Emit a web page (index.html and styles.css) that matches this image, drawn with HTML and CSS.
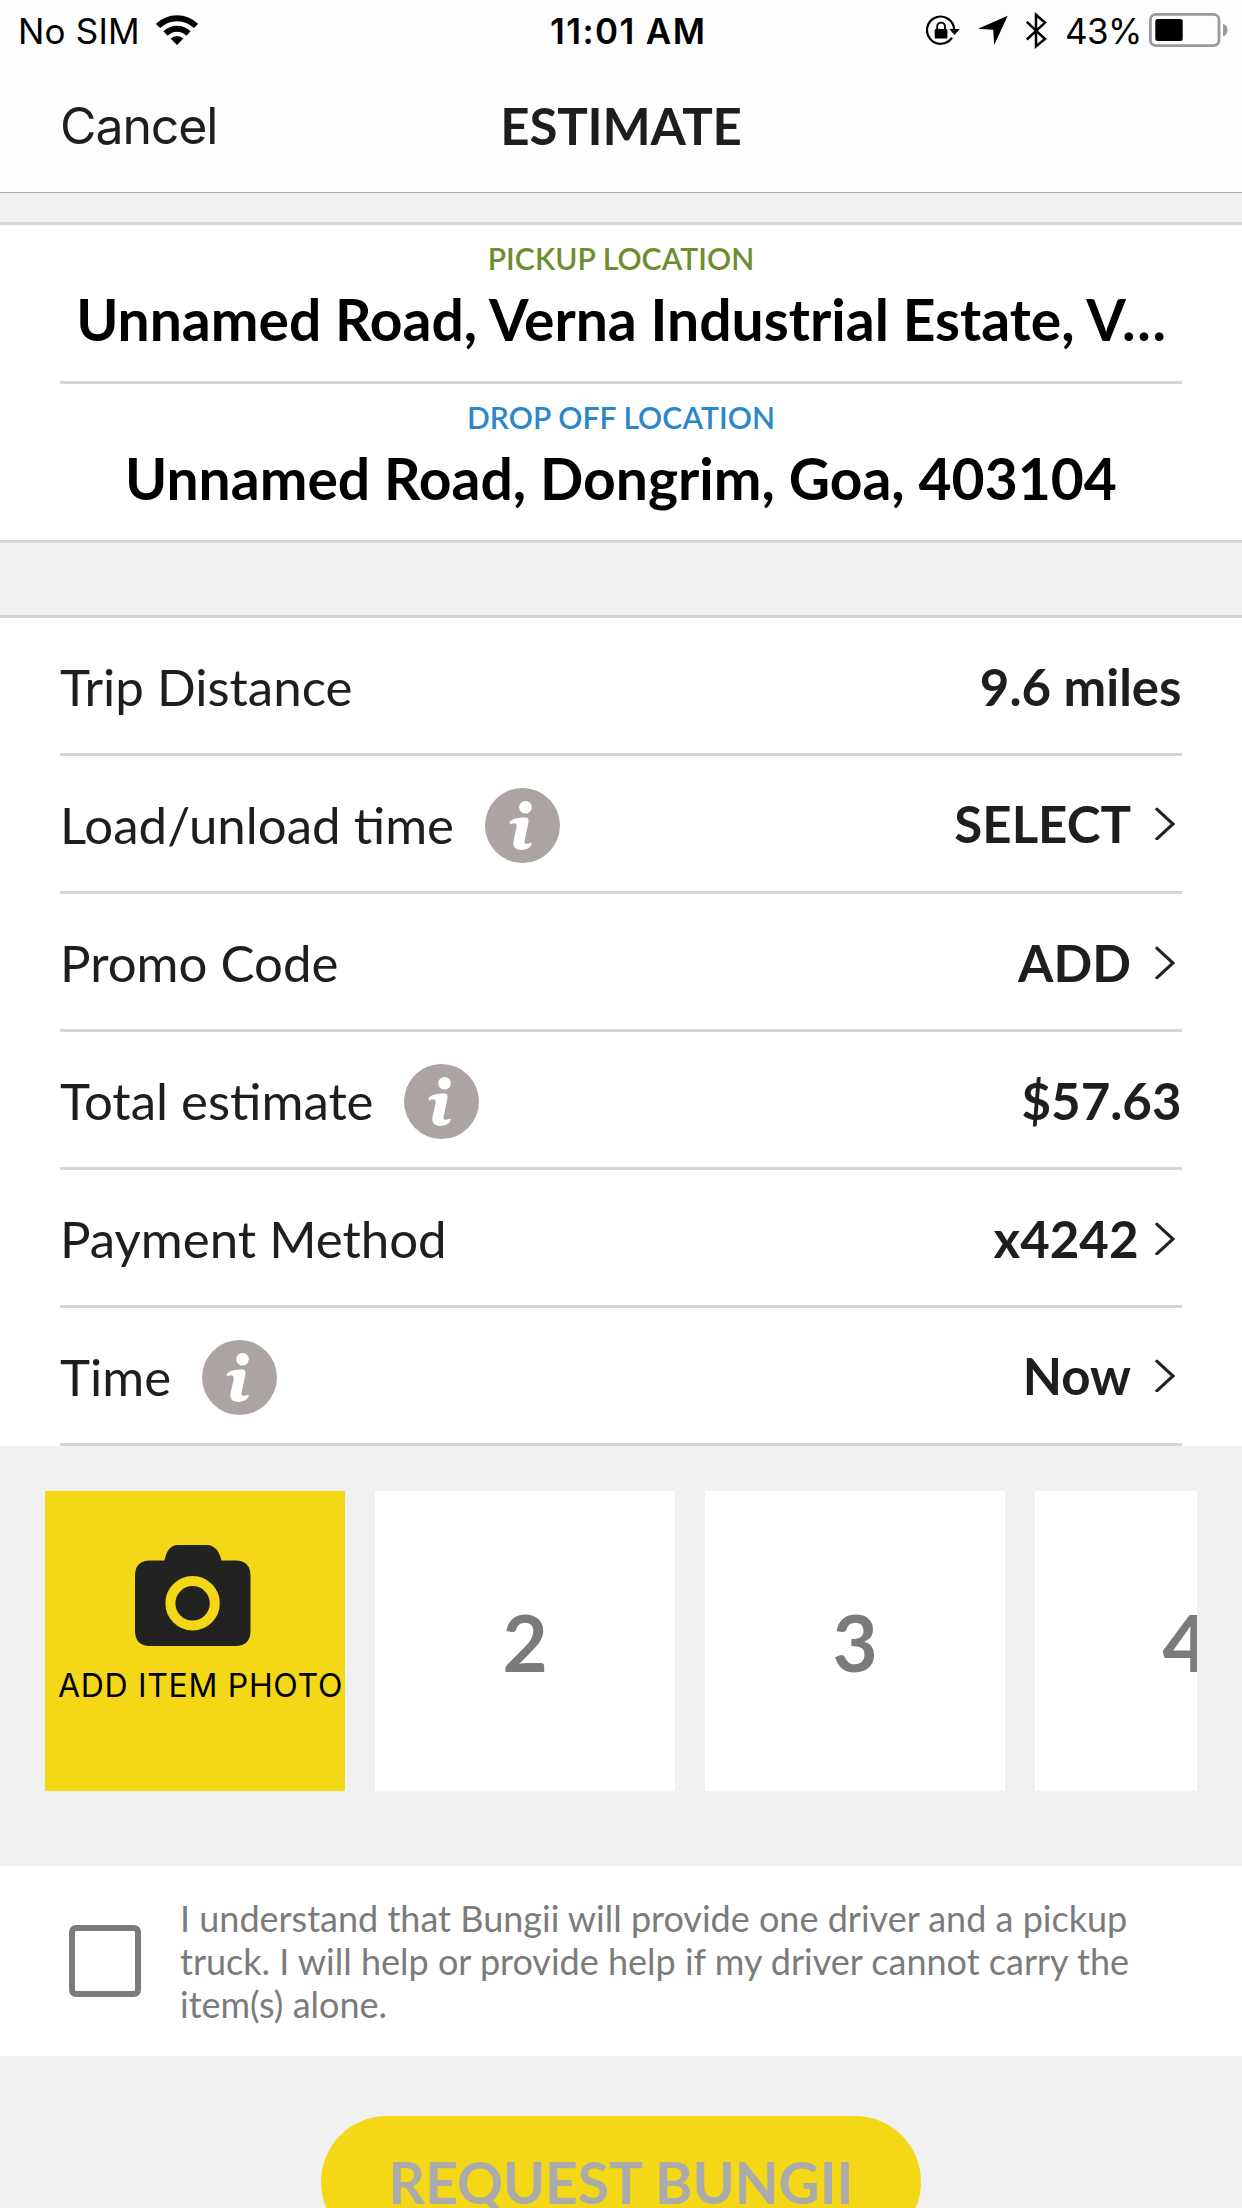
FILE: index.html
```html
<!DOCTYPE html>
<html lang="en">
<head>
<meta charset="utf-8">
<title>Estimate</title>
<link rel="stylesheet" href="styles.css">
</head>
<body>
<svg class="defs" aria-hidden="true">
  <symbol id="info" viewBox="0 0 75 75">
    <circle cx="37.5" cy="37.5" r="37.5" fill="#aca3a3"/>
    <circle cx="40.5" cy="19.3" r="6.3" fill="#fff"/>
    <path fill="#fff" d="M24.5 34C28 30.5 33 29.5 40 29.5c3.500 0 4 2.500 3.300 5.500L39.500 53c-.2 2 .5 3 2.500 2.800l4.700-1C47 58.500 42 62 36.500 62c-6.500 0-9-4-8-9l3-13c.8-3.500-.5-5-3-4.700L25 36.500Z"/>
  </symbol>
  <symbol id="chevron" viewBox="0 0 20 33">
    <path d="M1.800 2.200 18 17 1.800 31.800" fill="none" stroke="#222" stroke-width="3.100" stroke-linecap="round"/>
  </symbol>
</svg>
<div class="screen">
  <header class="header">
    <div class="status">
      <div class="status-left">
        <span class="status-text carrier">No SIM</span>
        <svg class="wifi" width="42" height="30" viewBox="0 0 42 30">
          <g fill="none" stroke="#000" stroke-width="6"><path d="M2 11A26.900 26.900 0 0 1 40 11"/><path d="M9.500 18.500A16.300 16.300 0 0 1 32.500 18.500"/></g>
          <path d="M21 30 14.600 23.600A9 9 0 0 1 27.400 23.600Z"/>
        </svg>
      </div>
      <span class="status-text time">11:01 AM</span>
      <div class="status-right">
        <svg width="34" height="30" viewBox="0 0 34 30">
          <path d="M28.200 15A13.600 13.600 0 1 0 26 22.600" fill="none" stroke="#000" stroke-width="2.200"/>
          <path d="M23.300 14H33.800L28.500 20Z"/>
          <rect x="8.700" y="14" width="12.700" height="9.600" rx="1.200"/>
          <path d="M11.200 14.500V11.500a3.900 3.900 0 0 1 7.800 0V14.500" fill="none" stroke="#000" stroke-width="1.900"/>
        </svg>
        <svg width="30" height="30" viewBox="0 0 30 30"><path d="M0 13.800 29.700.8 16.200 30 15.200 14.800Z"/></svg>
        <svg width="21" height="37" viewBox="0 0 21 37"><path d="M.8 9.800 19 27 10 34.300V2.700L19 10.600.8 27.500" fill="none" stroke="#000" stroke-width="2.500"/></svg>
        <span class="status-text percent">43%</span>
        <svg class="battery" width="79" height="34" viewBox="0 0 79 34">
          <rect x="1.400" y="1.400" width="68.600" height="31.200" rx="5.500" fill="none" stroke="#999" stroke-width="2.800"/>
          <rect x="6.300" y="6" width="27.400" height="22" rx="2.500"/>
          <path d="M74 11C80 12 80 22 74 23.500Z" fill="#999"/>
        </svg>
      </div>
    </div>
    <nav class="nav">
      <span class="cancel">Cancel</span>
      <h1 class="title">ESTIMATE</h1>
    </nav>
  </header>

  <section class="locations">
    <div class="location">
      <div class="location-label pickup">PICKUP LOCATION</div>
      <div class="address">Unnamed Road, Verna Industrial Estate, V…</div>
    </div>
    <div class="location">
      <div class="location-label dropoff">DROP OFF LOCATION</div>
      <div class="address">Unnamed Road, Dongrim, Goa, 403104</div>
    </div>
  </section>

  <section class="details">
    <div class="row"><span>Trip Distance</span><div class="value">9.6 miles</div></div>
    <div class="row"><span>Load/unload time</span><svg class="info"><use href="#info"/></svg><div class="value raised">SELECT<svg class="chevron"><use href="#chevron"/></svg></div></div>
    <div class="row"><span>Promo Code</span><div class="value">ADD<svg class="chevron"><use href="#chevron"/></svg></div></div>
    <div class="row"><span>Total estimate</span><svg class="info"><use href="#info"/></svg><div class="value">$57.63</div></div>
    <div class="row"><span>Payment Method</span><div class="value card-number">x4242<svg class="chevron"><use href="#chevron"/></svg></div></div>
    <div class="row"><span>Time</span><svg class="info"><use href="#info"/></svg><div class="value raised">Now<svg class="chevron"><use href="#chevron"/></svg></div></div>
  </section>

  <section class="photos">
    <div class="strip">
      <div class="photo add">
        <svg class="camera" width="116" height="101" viewBox="0 0 116 101">
          <path fill="#222221" d="M29.400 15.500C31.500 7 34.500 0 43 0H72C80 0 84.500 7 86.500 15.500H100.500Q115.500 15.500 115.500 31V85.500Q115.500 101 100.500 101H15Q0 101 0 85.500V31Q0 15.500 15 15.500Z"/>
          <circle cx="57.600" cy="58.300" r="22.200" fill="none" stroke="#f4d818" stroke-width="10"/>
        </svg>
        <span class="add-label">ADD ITEM PHOTO</span>
      </div>
      <div class="photo">2</div>
      <div class="photo">3</div>
      <div class="photo">4</div>
    </div>
  </section>

  <section class="consent">
    <span class="checkbox"></span>
    <p class="consent-text">I understand that Bungii will provide one driver and a pickup truck. I will help or provide help if my driver cannot carry the item(s) alone.</p>
  </section>

  <button class="request">REQUEST BUNGII</button>
</div>
</body>
</html>
```
FILE: styles.css
```css
* { box-sizing: border-box; }

body {
  margin: 0;
  background: #f1f1f1;
  font-family: Lato, "Liberation Sans", sans-serif;
  color: #1e1e1e;
}

svg { display: block; flex: none; }

.defs { position: absolute; width: 0; height: 0; }

.screen {
  display: flex;
  flex-direction: column;
  width: 1242px;
  height: 2208px;
  overflow: hidden;
}

.screen > * { flex: none; }

/* Header */
.header {
  background: #fdfdfd;
  border-bottom: 1px solid #a9a9a9;
}

.status {
  display: grid;
  grid-template-columns: 550px 1fr auto;
  align-items: center;
  height: 60px;
  padding-right: 14px;
  color: #000;
}

.status-left,
.status-right {
  display: flex;
  align-items: center;
}

.status-left { padding-left: 18px; }
.status-right { gap: 18px; }

.status-text {
  padding-top: 2px;
  font: 400 35px/42px Inter, "Liberation Sans", sans-serif;
  white-space: nowrap;
}

.carrier { width: 138px; letter-spacing: 0.2px; }
.time { font-weight: 600; letter-spacing: 1.4px; }
.percent { letter-spacing: -0.5px; }
.battery { margin-left: -11px; }

.nav {
  display: grid;
  grid-template-columns: 1fr auto 1fr;
  align-items: center;
  height: 132px;
  padding: 0 60px 1px;
}

.cancel {
  margin-top: 1px;
  font: 400 50px/60px Inter, "Liberation Sans", sans-serif;
  letter-spacing: -1.1px;
}

.title {
  margin: 0;
  font-size: 51px;
  font-weight: 700;
  line-height: 61px;
  letter-spacing: -0.2px;
}

/* Pickup and drop-off */
.locations {
  margin-top: 29px;
  padding: 0 60px;
  border-top: 3px solid #d5d5d1;
  border-bottom: 3px solid #d5d5d1;
  background: #fff;
  text-align: center;
}

.location { padding: 15px 0 28px; }
.location + .location { border-top: 3px solid #d5d5d1; }

.location-label {
  font-size: 30px;
  font-weight: 600;
  line-height: 36px;
  letter-spacing: 0.1px;
}

.pickup { color: #6b8e2e; }
.dropoff { color: #2c86cb; }

.address {
  margin-top: 9px;
  font-size: 57px;
  font-weight: 700;
  line-height: 68px;
  color: #000;
  white-space: nowrap;
}

/* Trip details */
.details {
  margin-top: 72px;
  padding: 0 60px;
  border-top: 3px solid #d5d5d1;
  background: #fff;
}

.row {
  display: flex;
  align-items: center;
  height: 138px;
  padding-top: 2px;
  border-bottom: 3px solid #d5d5d1;
  font-size: 51px;
  line-height: 61px;
}

.info {
  width: 75px;
  height: 75px;
  margin: 2px 0 0 30.6px;
}

.value {
  display: flex;
  align-items: center;
  gap: 23.5px;
  margin-left: auto;
  padding-right: 0.5px;
  font-weight: 700;
}

.raised { margin-bottom: 2px; }
.card-number { gap: 16px; }

.chevron {
  width: 20px;
  height: 33px;
  margin-right: 7px;
}

/* Item photos */
.photos { padding: 45px 45px 75px; }

.strip {
  display: flex;
  gap: 30px;
  overflow: hidden;
}

.photo {
  flex: none;
  width: 300px;
  height: 300px;
  background: #fff;
  color: #7b7b7b;
  font-size: 78px;
  font-weight: 700;
  line-height: 302px;
  text-align: center;
}

.add {
  display: flex;
  flex-direction: column;
  align-items: flex-start;
  gap: 20px;
  padding: 54px 0 0 13px;
  background: #f4d818;
}

.camera { margin-left: 77px; }

.add-label {
  font: 400 32px/39px Inter, "Liberation Sans", sans-serif;
  letter-spacing: 0.68px;
  color: #000;
  white-space: nowrap;
}

/* Consent */
.consent {
  display: flex;
  align-items: center;
  gap: 39px;
  height: 190px;
  padding: 0 60px 0 69px;
  background: #fff;
}

.checkbox {
  flex: none;
  width: 72px;
  height: 72px;
  border: 6px solid #7b7b7b;
  border-radius: 7px;
}

.consent-text {
  margin: 1px 0 0;
  font-size: 36px;
  line-height: 43px;
  color: #7b7b7b;
}

.request {
  align-self: center;
  width: 600px;
  height: 132px;
  margin-top: 60px;
  padding: 0;
  border: 0;
  border-radius: 66px;
  background: #f4d818;
  color: #ababab;
  font: 700 57px/68px Lato, "Liberation Sans", sans-serif;
  letter-spacing: -0.1px;
}
```
